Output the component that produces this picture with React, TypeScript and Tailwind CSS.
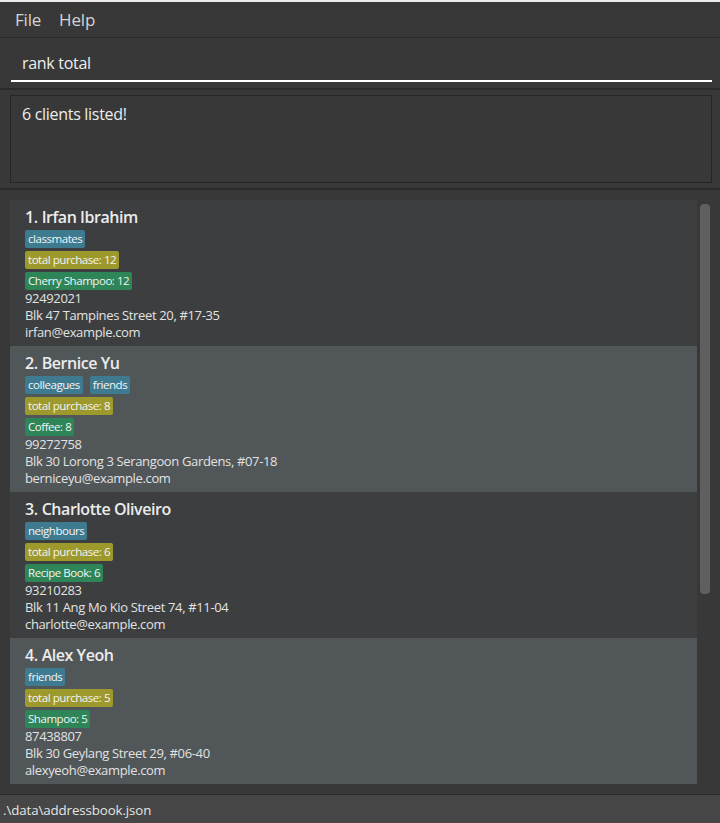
import React from "react";

type Client = {
  name: string;
  tags: string[];
  total: number;
  product: string;
  phone: string;
  address: string;
  email: string;
};

const clients: Client[] = [
  {
    name: "Irfan Ibrahim",
    tags: ["classmates"],
    total: 12,
    product: "Cherry Shampoo: 12",
    phone: "92492021",
    address: "Blk 47 Tampines Street 20, #17-35",
    email: "irfan@example.com",
  },
  {
    name: "Bernice Yu",
    tags: ["colleagues", "friends"],
    total: 8,
    product: "Coffee: 8",
    phone: "99272758",
    address: "Blk 30 Lorong 3 Serangoon Gardens, #07-18",
    email: "berniceyu@example.com",
  },
  {
    name: "Charlotte Oliveiro",
    tags: ["neighbours"],
    total: 6,
    product: "Recipe Book: 6",
    phone: "93210283",
    address: "Blk 11 Ang Mo Kio Street 74, #11-04",
    email: "charlotte@example.com",
  },
  {
    name: "Alex Yeoh",
    tags: ["friends"],
    total: 5,
    product: "Shampoo: 5",
    phone: "87438807",
    address: "Blk 30 Geylang Street 29, #06-40",
    email: "alexyeoh@example.com",
  },
];

const font = { fontFamily: '"Open Sans", "Noto Sans", sans-serif' };

function Tag({ children, color }: { children: React.ReactNode; color: string }) {
  return (
    <span
      className={`inline-flex h-[18px] items-center rounded-[2px] px-[3px] text-[11.5px] leading-none text-[#f4f4f4] tracking-[-0.45px] ${color}`}
    >
      {children}
    </span>
  );
}

function Card({ c, i }: { c: Client; i: number }) {
  const bg = i % 2 === 0 ? "bg-[#3c3e3f]" : "bg-[#515658]";
  return (
    <div className={`h-[146px] ${bg} pl-[15px] pt-[7px]`}>
      <div className="flex text-[16px] font-semibold leading-[21px] text-[#ececec] tracking-[-0.45px]">
        <span>{i + 1}.</span>
        <span className="ml-[4px]">{c.name}</span>
      </div>
      <div className="mt-[2px] flex flex-col gap-[3px]">
        <div className="flex gap-[7px]">
          {c.tags.map((t) => (
            <Tag key={t} color="bg-[#3e7b91]">
              {t}
            </Tag>
          ))}
        </div>
        <div className="flex">
          <Tag color="bg-[#9e992c]">total purchase: {c.total}</Tag>
        </div>
        <div className="flex">
          <Tag color="bg-[#2e8557]">{c.product}</Tag>
        </div>
      </div>
      <div className="text-[13px] leading-[17px] text-[#e2e2e2] tracking-[-0.35px]">
        <div>{c.phone}</div>
        <div>{c.address}</div>
        <div>{c.email}</div>
      </div>
    </div>
  );
}

export default function App() {
  return (
    <div className="flex h-[823px] w-[720px] flex-col overflow-hidden bg-[#383838]" style={font}>
      <div className="h-[2px] bg-[#ececec]" />
      <div className="flex h-[36px] items-center gap-[18px] border-b border-[#2b2b2b] pl-[15px] text-[17px] text-[#d4d4d4] tracking-[-0.2px]">
        <span>File</span>
        <span>Help</span>
      </div>
      <div className="h-[50px] pl-[11px] pr-[8px]">
        <div className="flex h-[44px] items-center border-b-2 border-white pl-[11px] pt-[7px] text-[16px] text-[#eeeeee] tracking-[-0.3px]">
          rank total
        </div>
      </div>
      <div className="h-[2px] bg-[#2b2b2b]" />
      <div className="h-[98px] py-[5px] pl-[10px] pr-[8px]">
        <div className="h-full border border-[#262626] pl-[11px] pt-[7px] text-[16px] leading-[22px] text-[#eeeeee] tracking-[-0.3px]">
          6 clients listed!
        </div>
      </div>
      <div className="h-[2px] bg-[#2b2b2b]" />
      <div className="flex flex-1 gap-[3px] pl-[10px] pt-[10px]">
        <div className="w-[687px] flex flex-col">
          {clients.map((c, i) => (
            <Card key={c.name} c={c} i={i} />
          ))}
        </div>
        <div className="pt-[4px]">
          <div className="h-[390px] w-[10px] rounded-[4px] bg-[#5f5f5f]" />
        </div>
      </div>
      <div className="flex h-[29px] items-center border-t border-[#2b2b2b] bg-[#464646] pl-[3px] pt-[3px] text-[13.3px] text-[#e4e4e4] tracking-[-0.1px]">
        .\data\addressbook.json
      </div>
    </div>
  );
}
